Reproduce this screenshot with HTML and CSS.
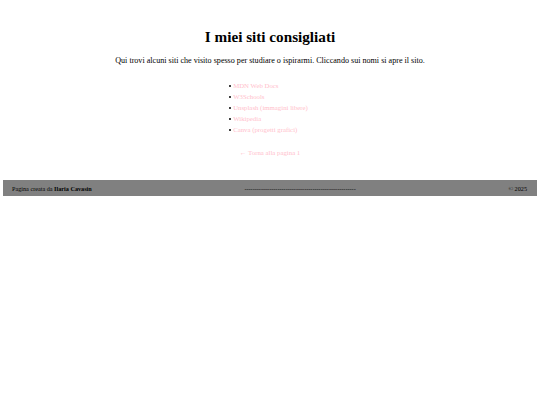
FILE: index.html
```html
<!DOCTYPE html>
<html lang="it">
<head>
<meta charset="utf-8">
<title>I miei siti consigliati</title>
<link rel="stylesheet" href="styles.css">
</head>
<body>
<main class="content">
  <h1 class="title">I miei siti consigliati</h1>
  <p class="intro">Qui trovi alcuni siti che visito spesso per studiare o ispirarmi. Cliccando sui nomi si apre il sito.</p>
  <ul class="sites">
    <li><a href="#">MDN Web Docs</a></li>
    <li><a href="#">W3Schools</a></li>
    <li><a href="#">Unsplash (immagini libere)</a></li>
    <li><a href="#">Wikipedia</a></li>
    <li><a href="#">Canva (progetti grafici)</a></li>
  </ul>
  <p class="back"><a href="#">← Torna alla pagina 1</a></p>
</main>
<footer class="footer">
  <span>Pagina creata da <strong>Ilaria Cavasin</strong></span>
  <span>------------------------------------------------------</span>
  <span>© 2025</span>
</footer>
</body>
</html>
```

FILE: styles.css
```css
body {
  margin: 4px 3px;
  font-family: "Liberation Serif", "Times New Roman", serif;
  font-size: 8.1px;
  color: #000;
  background: #fff;
}
.content {
  text-align: center;
  padding-top: 24px;
}
.title {
  font-size: 15.2px;
  font-weight: bold;
  margin: 0 0 10px;
}
.intro {
  margin: 0 0 15px;
}
.sites {
  display: inline-block;
  text-align: left;
  margin: 0;
  padding: 0 3px 0 4px;
  list-style: none;
  font-size: 6.8px;
}
.sites li {
  line-height: 11px;
}
.sites li::before {
  content: "";
  display: inline-block;
  width: 2px;
  height: 2px;
  border-radius: 50%;
  background: #000;
  margin: 0 2px 0 -4px;
  vertical-align: middle;
}
.sites a, .back a {
  color: #ffc0cb;
  text-decoration: none;
}
.back {
  margin: 14px 0 0;
  font-size: 6.8px;
}
.footer {
  margin-top: 24px;
  background: #808080;
  display: flex;
  justify-content: space-between;
  align-items: center;
  height: 16px;
  padding: 0 10px 0 9px;
  font-size: 6.2px;
}
```
